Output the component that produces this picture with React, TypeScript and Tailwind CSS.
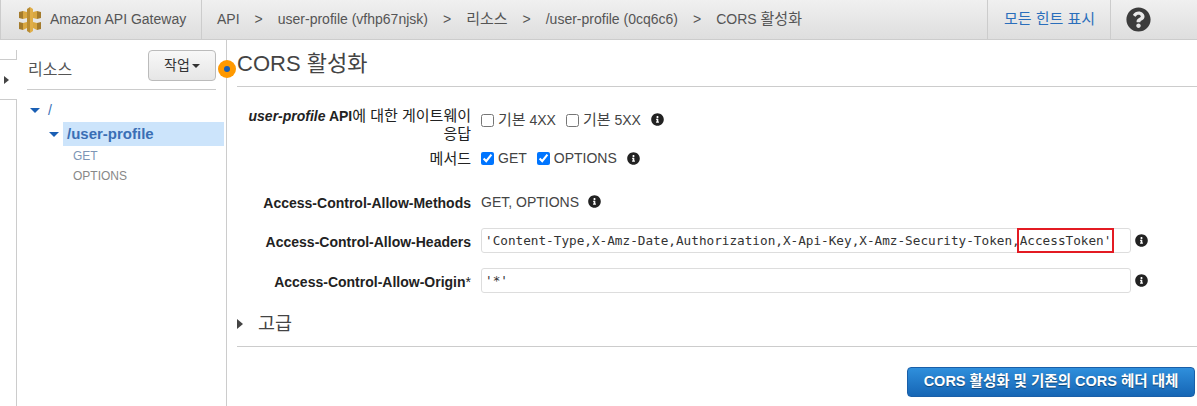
import type { ReactNode } from "react";
import { FaInfoCircle, FaQuestionCircle } from "react-icons/fa";

function Logo() {
  return (
    <svg width="22" height="26" viewBox="0 0 22 26">
      <path d="M0 5l4-1v8l-4-1zM0 15l4 1v7l-4-1z" fill="#a47b2c" />
      <path d="M4 4l4 1v6l-4 1zM4 16l4-1v6l-4 2z" fill="#d9a741" />
      <path d="M22 5l-4-1v8l4-1zM22 15l-4 1v7l4-1z" fill="#a47b2c" />
      <path d="M18 4l-4 1v6l4 1zM18 16l-4-1v6l4 2z" fill="#d9a741" />
      <path d="M11 0L8 2v22l3 2z" fill="#b98c32" />
      <path d="M11 0l3 2v22l-3 2z" fill="#e0ae48" />
    </svg>
  );
}

function Ko({ children }: { children: ReactNode }) {
  return <span className="text-[15px] font-normal">{children}</span>;
}

const crumbs: ReactNode[] = [
  "API",
  "user-profile (vfhp67njsk)",
  <Ko key="res">리소스</Ko>,
  "/user-profile (0cq6c6)",
  <span key="cors">CORS <Ko>활성화</Ko></span>,
];

function Info({ className }: { className: string }) {
  return <FaInfoCircle className={`text-[13px] text-[#222] ${className}`} />;
}

function Check({ checked, label }: { checked: boolean; label: ReactNode }) {
  return (
    <label className="flex items-center gap-[4px]">
      <input type="checkbox" defaultChecked={checked} className="m-0 h-[13px] w-[13px]" />
      <span>{label}</span>
    </label>
  );
}

function Caret() {
  return <span className="h-0 w-0 border-x-[5px] border-t-[5px] border-x-transparent border-t-[#1a5fb4]" />;
}

export default function App() {
  return (
    <div className="flex h-[406px] w-[1197px] flex-col overflow-hidden bg-white font-['Liberation_Sans','Noto_Sans_CJK_KR',sans-serif] text-[14px] text-[#333]">
      <header className="flex h-10 shrink-0 items-center border-b border-[#ccc] bg-gradient-to-b from-[#f0f0f0] to-[#dedede]">
        <div className="flex h-full w-[202px] items-center border-x border-[#ccc] pl-[18px] text-[#555]">
          <Logo />
          <span className="ml-[9px]">Amazon API Gateway</span>
        </div>
        <nav className="flex flex-1 items-center pl-[15px] text-[#555]">
          {crumbs.map((c, i) => (
            <span key={i} className="flex items-center">
              {i > 0 && <span className="mx-[15px]">&gt;</span>}
              {c}
            </span>
          ))}
        </nav>
        <div className="flex h-full w-[123px] items-center justify-center border-l border-[#ccc] pl-[1px] text-[15px] text-[#2a6ebb]">모든 힌트 표시</div>
        <div className="flex h-full w-[87px] items-center border-l border-[#ccc] pl-[15px]">
          <FaQuestionCircle className="text-[25px] text-[#3c3c3c]" />
        </div>
      </header>

      <div className="relative flex flex-1">
        <aside className="flex w-[17px] shrink-0 flex-col pt-[10px]">
          <div className="h-[10px] border-r border-b border-[#ccc]" />
          <div className="flex h-[39px] items-center pl-1">
            <span className="h-0 w-0 border-y-[4px] border-l-[5px] border-y-transparent border-l-[#444]" />
          </div>
          <div className="flex-1 border-t border-r border-[#ccc]" />
        </aside>

        <section className="w-[210px] shrink-0 border-r border-[#ccc] pt-[10px]">
          <div className="mx-[10px] flex h-[40px] items-start justify-between border-b border-[#ccc]">
            <span className="mt-[8px] ml-[1px] text-[16px] text-[#555]">리소스</span>
            <button className="flex h-[31px] w-[68px] items-center justify-center rounded-[4px] border border-[#bbb] bg-gradient-to-b from-[#f8f8f8] to-[#e6e6e6] text-[#333]">
              작업
              <span className="ml-[2px] h-0 w-0 border-x-[4px] border-t-[4px] border-x-transparent border-t-[#333]" />
            </button>
          </div>
          <div className="mt-[8px] flex h-6 items-center pl-[13px] text-[#3a6fb5]">
            <Caret />
            <span className="ml-[8px]">/</span>
          </div>
          <div className="flex h-6 items-center pl-[32px]">
            <Caret />
            <div className="ml-[4px] flex h-6 w-[161px] items-center bg-[#cce4fb] pl-[4px] text-[15px] font-bold text-[#3a6fb5]">/user-profile</div>
          </div>
          <div className="flex h-5 items-center pl-[56px] text-[12px] text-[#7d95b5]">GET</div>
          <div className="flex h-5 items-center pl-[56px] text-[12px] text-[#888]">OPTIONS</div>
        </section>

        <main className="flex-1 pl-[10px]">
          <h1 className="flex h-[47px] items-center border-b border-[#ccc] pt-[1px] text-[22px] text-[#444]">CORS 활성화</h1>
          <div className="mt-[20px] grid grid-cols-[234px_1fr] gap-x-[10px] text-[#333]">
            <div className="h-[34px] text-right font-bold leading-[17px] text-[#222]">
              <em>user-profile</em> API<Ko>에 대한 게이트웨이</Ko>
              <br />
              <Ko>응답</Ko>
            </div>
            <div className="flex h-[34px] items-start gap-[10px] pt-[2px] text-[#444]">
              <Check checked={false} label={<><Ko>기본</Ko> 4XX</>} />
              <Check checked={false} label={<><Ko>기본</Ko> 5XX</>} />
              <Info className="mt-[4px]" />
            </div>
            <div className="mt-[7px] h-[21px] text-right text-[#222]"><Ko>메서드</Ko></div>
            <div className="mt-[7px] flex h-[21px] items-start gap-[10px] text-[#444]">
              <Check checked label="GET" />
              <Check checked label="OPTIONS" />
              <Info className="mt-[4px]" />
            </div>
            <div className="mt-[24px] h-[19px] text-right font-bold text-[#222]">Access-Control-Allow-Methods</div>
            <div className="mt-[23px] flex h-[20px] items-start gap-[9px] text-[#444]">
              GET, OPTIONS
              <Info className="mt-[3px]" />
            </div>
            <div className="mt-[16px] flex h-[25px] items-center justify-end pt-[3px] font-bold text-[#222]">Access-Control-Allow-Headers</div>
            <div className="mt-[16px] flex h-[25px] items-center">
              <div className="relative flex h-[25px] w-[650px] items-center rounded-[3px] border border-[#ddd] pl-[3px] font-['DejaVu_Sans_Mono',monospace] text-[12.700px] text-[#333]">
                'Content-Type,X-Amz-Date,Authorization,X-Api-Key,X-Amz-Security-Token,AccessToken'
                <span className="absolute top-[-1px] left-[535px] h-[25px] w-[97px] border-2 border-[#e31b23]" />
              </div>
              <Info className="ml-[4px]" />
            </div>
            <div className="mt-[15px] flex h-[25px] items-center justify-end pt-[3px] font-bold text-[#222]">
              Access-Control-Allow-Origin<span className="font-normal">*</span>
            </div>
            <div className="mt-[15px] flex h-[25px] items-center">
              <div className="flex h-[25px] w-[650px] items-center rounded-[3px] border border-[#ddd] pl-[3px] font-['DejaVu_Sans_Mono',monospace] text-[12.700px] text-[#333]">'*'</div>
              <Info className="ml-[4px]" />
            </div>
          </div>
          <div className="mt-[15px] flex h-[39px] items-center border-b border-[#ccc] pb-[7px] text-[18.500px] text-[#444]">
            <span className="h-0 w-0 border-y-[5px] border-l-[6px] border-y-transparent border-l-[#444]" />
            <span className="ml-[15px]">고급</span>
          </div>
          <div className="mt-[20px] flex justify-end pr-[2px]">
            <button className="flex h-[30px] w-[288px] items-center justify-center rounded-[4px] border border-[#1a5fa8] bg-gradient-to-b from-[#2f8fdc] to-[#1666b5] text-[14.500px] font-bold text-white [text-shadow:0_1px_1px_rgba(0,0,0,0.4)]">
              CORS 활성화 및 기존의 CORS 헤더 대체
            </button>
          </div>
        </main>

        <span className="absolute top-[20px] left-[218px] flex h-[18px] w-[18px] items-center justify-center rounded-full bg-[#f90]">
          <span className="h-[6px] w-[6px] rounded-full bg-[#1a5fb4]" />
        </span>
      </div>
    </div>
  );
}
